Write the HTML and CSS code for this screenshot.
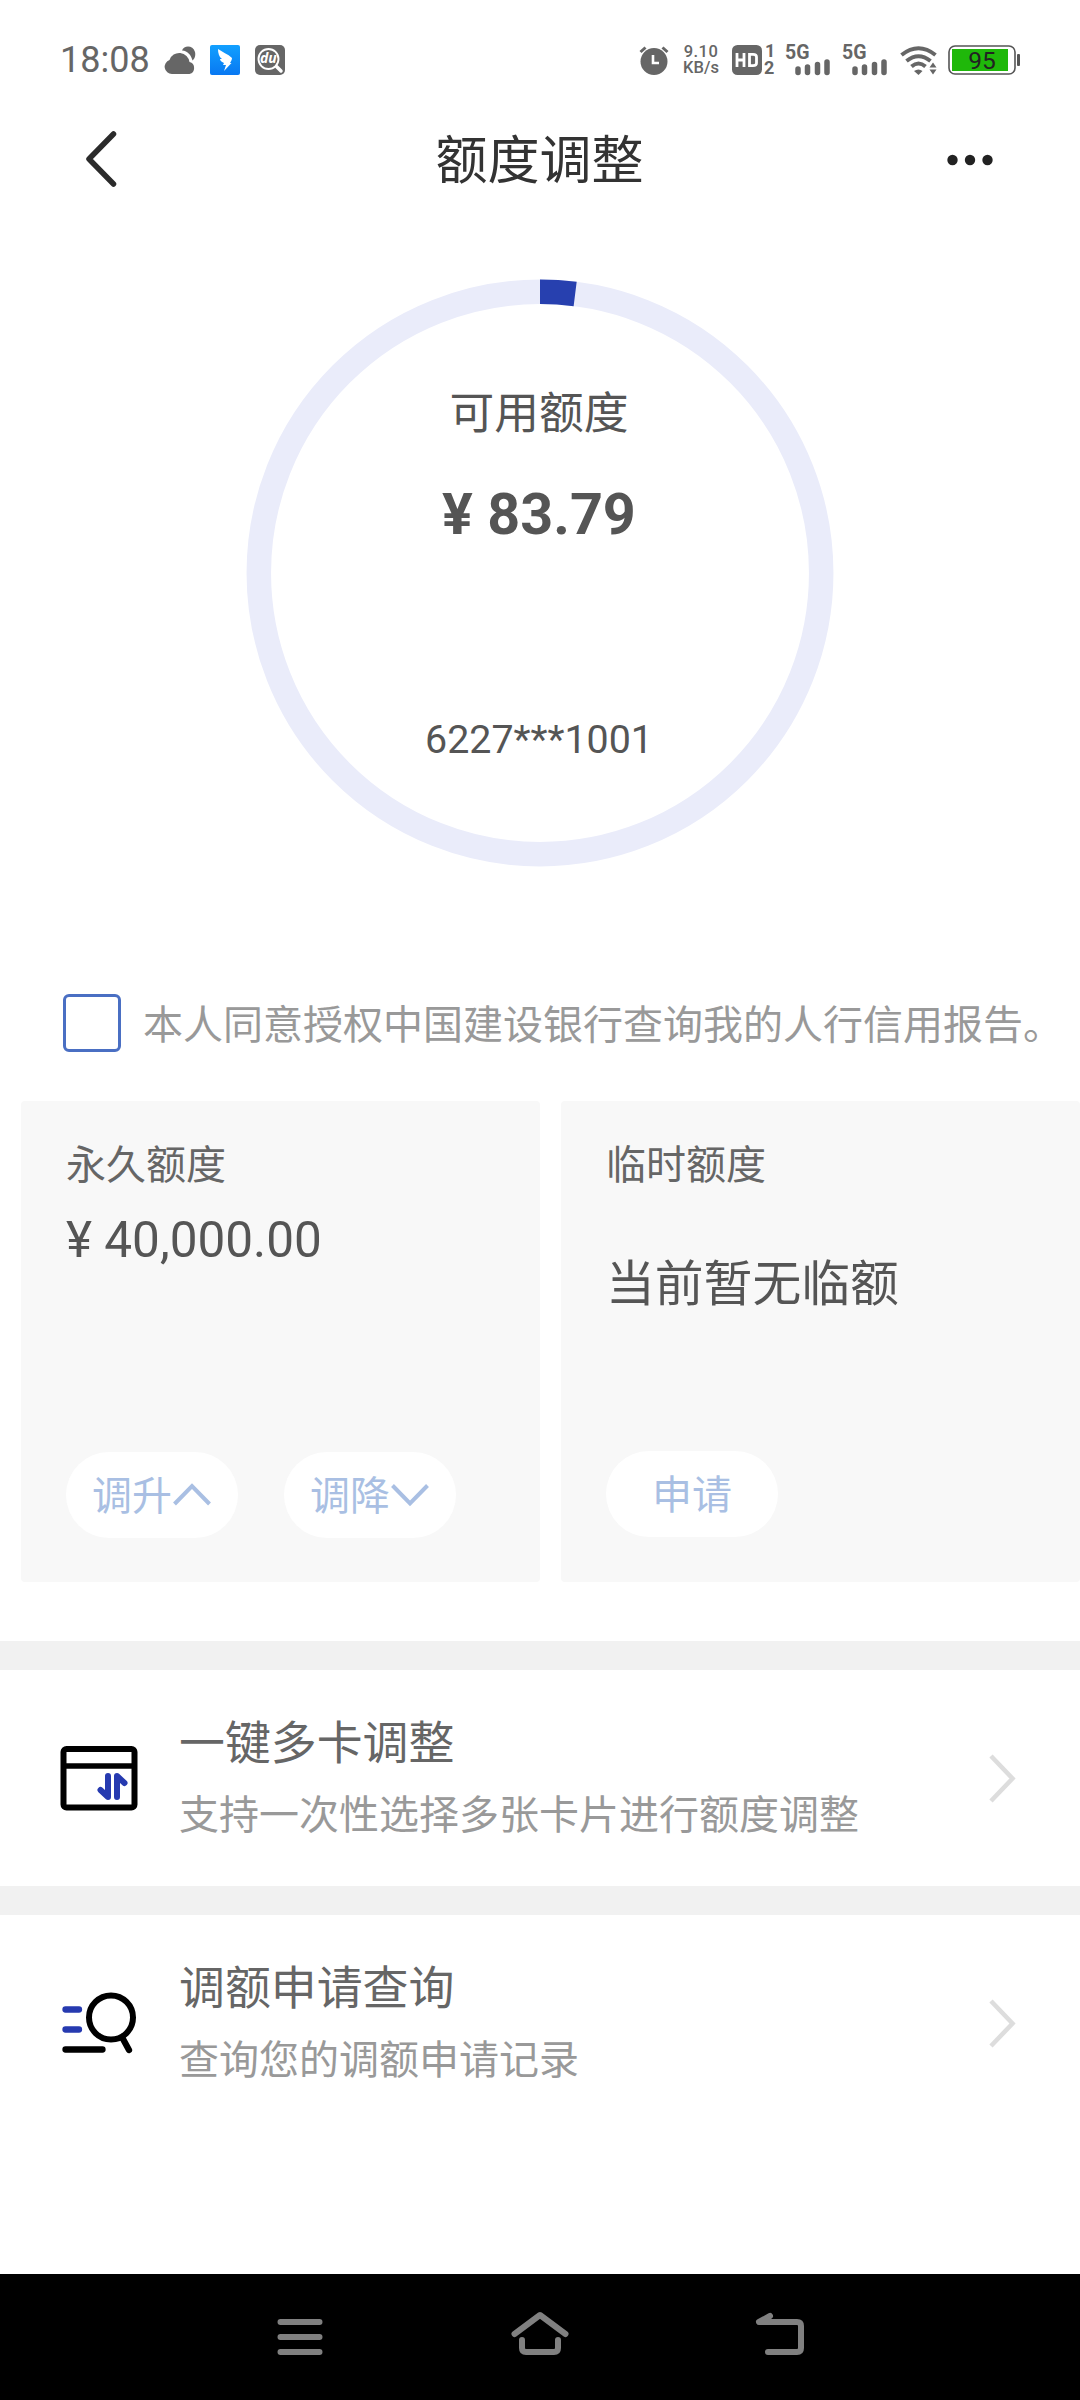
FILE: index.html
```html
<!DOCTYPE html>
<html lang="zh-CN">
<head>
<meta charset="utf-8">
<title>额度调整</title>
<link rel="stylesheet" href="styles.css">
</head>
<body>
<div class="screen">
  <div class="status">
    <span class="clock">18:08</span>
    <svg class="s-cloud" width="31" height="30" viewBox="0 0 31 30"><path d="M17 5.500C19 0 28 0 30 7C31 11 29 14.500 27.500 15.500C26 10 23 6 17 5.500Z" fill="#666"/><path d="M7 29A7.200 7.200 0 0 1 4.500 15A10.300 10.300 0 0 1 24.500 17A6.200 6.200 0 0 1 24.500 29Z" fill="#666"/></svg>
    <svg class="s-app" width="30" height="30" viewBox="0 0 30 30"><defs><linearGradient id="g" x1="0" y1="0" x2="0" y2="1"><stop offset="0" stop-color="#12a0ff"/><stop offset="1" stop-color="#0878f2"/></linearGradient></defs><rect width="30" height="30" rx="2" fill="url(#g)"/><path d="M8 4C12 7 18 9 22 13C22 15 21 16 20 18H21.500L14 26L16 20H13L14 18C11 17 10 15 10 14L12 14C9 12 8 8 8 4Z" fill="#fff"/></svg>
    <svg class="s-app" width="30" height="30" viewBox="0 0 30 30"><rect width="30" height="30" rx="5" fill="#666"/><circle cx="13.500" cy="14" r="10" fill="none" stroke="#fff" stroke-width="1.900"/><path d="M21.500 21.500L26 26" stroke="#fff" stroke-width="3.500" stroke-linecap="round"/><text x="13.300" y="18" class="du">du</text></svg>
    <div class="status-right">
      <svg width="30" height="30" viewBox="0 0 30 30"><circle cx="15" cy="16.500" r="13.500" fill="#666"/><path d="M1.500 7L6.500 2.500M28.500 7L23.500 2.500" stroke="#666" stroke-width="3"/><path d="M14 10V18H20" fill="none" stroke="#fff" stroke-width="2.600"/></svg>
      <div class="net"><span>9.10</span><span>KB/s</span></div>
      <svg class="s-hd" width="44" height="30" viewBox="0 0 44 30"><rect width="30" height="30" rx="5.500" fill="#666"/><path d="M5 8V22M12 8V22M5 15H12M17.500 9.300H21Q24.500 9.300 24.500 12V18Q24.500 20.700 21 20.700H17.500Z" fill="none" stroke="#fff" stroke-width="2.800"/><text x="33" y="12.300" class="sim">1</text><text x="32" y="29.300" class="sim">2</text></svg>
      <svg class="s-5g" width="46" height="30" viewBox="0 0 46 30"><text x="0" y="14.300" class="gen">5G</text><path d="M13 24V27.500M22.500 22V27.500M32.500 19.500V27.500M42 17V27.500" stroke="#666" stroke-width="5.500" stroke-linecap="round"/></svg>
      <svg class="s-5g2" width="46" height="30" viewBox="0 0 46 30"><text x="0" y="14.300" class="gen">5G</text><path d="M13 24V27.500M22.500 22V27.500M32.500 19.500V27.500M42 17V27.500" stroke="#666" stroke-width="5.500" stroke-linecap="round"/></svg>
      <svg class="s-wifi" width="37" height="30" viewBox="0 0 37 30"><path d="M1.500 10Q18.500-3.500 35.500 10M6.500 16Q18.500 6.500 30.500 16M11.500 21.500Q18.500 15.500 25.500 21.500" fill="none" stroke="#666" stroke-width="4"/><path d="M14 26Q18.500 23 22.500 26L18.500 30Z" fill="#666"/><path d="M29.500 22.500L33 17.500L36.500 22.500ZM29.500 24.500H36.500L33 29.500Z" fill="#666"/></svg>
      <svg class="s-bat" width="73" height="30" viewBox="0 0 73 30"><rect x="1" y="1" width="66" height="28" rx="6" fill="#fff" stroke="#555" stroke-width="1.600"/><rect x="4" y="4" width="56" height="22" fill="#1fb80a"/><rect x="69" y="9" width="3" height="12" rx="1" fill="#555"/><text x="34" y="23.500" class="pct">95</text></svg>
    </div>
  </div>

  <header class="bar">
    <svg width="34" height="60" viewBox="0 0 34 60"><path d="M29.500 4L5 29L29.500 54" fill="none" stroke="#2b2b2b" stroke-width="5.500" stroke-linecap="round" stroke-linejoin="round"/></svg>
    <h1>额度调整</h1>
    <svg width="50" height="12" viewBox="0 0 50 12"><g fill="#222"><circle cx="7.500" cy="6" r="5.200"/><circle cx="25" cy="6" r="5.200"/><circle cx="42.500" cy="6" r="5.200"/></g></svg>
  </header>

  <section class="gauge">
    <svg class="ring" width="588" height="588" viewBox="-294 -294 588 588"><circle r="281.200" fill="none" stroke="#eaecfa" stroke-width="24.500"/><circle r="281.200" fill="none" stroke="#2740af" stroke-width="24.500" pathLength="100" stroke-dasharray="2 98" transform="rotate(-90)"/></svg>
    <div class="gauge-text">
      <div class="g-label">可用额度</div>
      <div class="g-amount">¥ 83.79</div>
      <div class="g-card">6227***1001</div>
    </div>
  </section>

  <label class="agree"><span class="box"></span><span class="agree-text">本人同意授权中国建设银行查询我的人行信用报告。</span></label>

  <section class="cards">
    <div class="card">
      <div class="c-label">永久额度</div>
      <div class="c-amount">¥ 40,000.00</div>
      <div class="buttons">
        <div class="pill">调升<svg width="40" height="26" viewBox="0 0 40 26"><path d="M2.500 22L20 4L37.500 22" fill="none" stroke="#a9bfe3" stroke-width="4"/></svg></div>
        <div class="pill">调降<svg width="40" height="26" viewBox="0 0 40 26"><path d="M2.500 3.500L20 21.500L37.500 3.500" fill="none" stroke="#a9bfe3" stroke-width="4"/></svg></div>
      </div>
    </div>
    <div class="card right">
      <div class="c-label">临时额度</div>
      <div class="c-none">当前暂无临额</div>
      <div class="buttons"><div class="pill">申请</div></div>
    </div>
  </section>

  <section class="row">
    <svg class="r-icon" width="78" height="66" viewBox="0 0 78 66"><rect x="3.500" y="4" width="71" height="58.500" rx="3" fill="none" stroke="#000" stroke-width="6"/><path d="M4 21H74" stroke="#000" stroke-width="5.500"/><path d="M48 31V52L40.500 45M57 52V31L64.500 38" fill="none" stroke="#263ab0" stroke-width="6" stroke-linecap="round" stroke-linejoin="round"/></svg>
    <div class="r-text"><div class="r-title">一键多卡调整</div><div class="r-sub">支持一次性选择多张卡片进行额度调整</div></div>
    <svg class="chev" width="30" height="50" viewBox="0 0 30 50"><path d="M3 3L24.500 25.500L3 48" fill="none" stroke="#ddd" stroke-width="4.500"/></svg>
  </section>
  <section class="row">
    <svg class="r-icon" width="78" height="66" viewBox="0 0 78 66"><path d="M5.500 19.500H19M5.500 39.500H19" stroke="#263ab0" stroke-width="6.300" stroke-linecap="round"/><path d="M5.500 59.500H42.500M63 49L69 60" stroke="#000" stroke-width="6.300" stroke-linecap="round"/><circle cx="51" cy="27.500" r="22" fill="none" stroke="#000" stroke-width="6"/></svg>
    <div class="r-text"><div class="r-title">调额申请查询</div><div class="r-sub">查询您的调额申请记录</div></div>
    <svg class="chev" width="30" height="50" viewBox="0 0 30 50"><path d="M3 3L24.500 25.500L3 48" fill="none" stroke="#ddd" stroke-width="4.500"/></svg>
  </section>

  <nav class="nav">
    <svg width="60" height="48" viewBox="0 0 60 48"><path d="M10.500 11H49.500M10.500 26H49.500M10.500 41H49.500"/></svg>
    <svg width="60" height="48" viewBox="0 0 60 48"><path d="M4.500 23L30 4L55.500 23M12 29V37Q12 41 16 41H44Q48 41 48 37V29"/></svg>
    <svg width="60" height="48" viewBox="0 0 60 48"><path d="M20 5L9 11H47Q51 11 51 15V37Q51 41 47 41H18"/></svg>
  </nav>
</div>
</body>
</html>
```
FILE: styles.css
```css
* { box-sizing: border-box; }
body {
  margin: 0;
  background: #fff;
  font-family: Roboto, "Noto Sans CJK SC", sans-serif;
}
svg { display: block; flex: none; overflow: visible; }
.screen {
  width: 1080px;
  height: 2400px;
  display: flex;
  flex-direction: column;
  overflow: hidden;
}

/* status bar */
.status {
  height: 120px;
  padding: 0 59px 0 60px;
  display: flex;
  align-items: center;
  color: #666;
}
.clock { width: 105px; font-size: 36px; line-height: 36px; }
.s-app { margin-left: 15px; }
.s-cloud + .s-app { margin-left: 14px; }
.status-right { margin-left: auto; display: flex; align-items: center; }
.net {
  width: 36px;
  margin-left: 14px;
  display: flex;
  flex-direction: column;
  align-items: center;
  font-size: 16.500px;
  line-height: 16px;
  font-weight: 500;
}
.net span:first-child { letter-spacing: 0.500px; }
.s-hd { margin-left: 13px; }
.s-5g { margin-left: 9px; }
.s-5g2 { margin-left: 11px; }
.s-wifi { margin-left: 12px; }
.s-bat { margin-left: 11px; }
.du { font: italic bold 14px "Noto Sans", sans-serif; fill: #fff; text-anchor: middle; }
.sim { font: bold 18px Roboto, sans-serif; fill: #666; }
.gen { font: bold 19.500px Roboto, sans-serif; fill: #666; }
.pct { font: 24.500px Roboto, sans-serif; fill: #222; text-anchor: middle; }

/* title bar */
.bar {
  height: 80px;
  padding: 0 85px 0 84px;
  display: flex;
  align-items: center;
  justify-content: space-between;
}
.bar h1 {
  margin: 0 0 0 16px;
  padding-top: 4px;
  font-size: 52px;
  line-height: 60px;
  font-weight: 400;
  color: #333;
}

/* limit gauge */
.gauge {
  height: 588px;
  margin-top: 79px;
  display: grid;
  justify-content: center;
}
.ring, .gauge-text { grid-area: 1 / 1; }
.gauge-text {
  display: flex;
  flex-direction: column;
  align-items: center;
  padding: 105px 2px 0 0;
  color: #555;
}
.g-label { font-size: 44.700px; line-height: 60px; }
.g-amount { margin-top: 41px; font-size: 57.500px; line-height: 60px; font-weight: 700; }
.g-card { margin-top: 167px; font-size: 39.400px; line-height: 56px; }

.agree {
  height: 60px;
  margin-top: 126px;
  padding-left: 63px;
  display: flex;
  align-items: center;
  gap: 22px;
  font-size: 40px;
  line-height: 60px;
  color: #999;
  white-space: nowrap;
}
.agree-text { padding-top: 5px; }
.box { width: 58px; height: 58px; border: 3px solid #4a6fc3; border-radius: 6px; }

/* limit cards */
.cards {
  height: 540px;
  margin-top: 48px;
  padding-left: 21px;
  display: grid;
  grid-template-columns: 519px 519px;
  gap: 21px;
}
.card {
  height: 481px;
  padding: 36px 45px 44px;
  border-radius: 4px;
  background: #f8f8f8;
  display: flex;
  flex-direction: column;
}
.right { padding-bottom: 45px; }
.c-label { font-size: 40px; line-height: 58px; color: #666; }
.c-amount { margin-top: 16px; font-size: 49.500px; line-height: 58px; color: #555; }
.c-none { margin-top: 61px; font-size: 48.800px; line-height: 58px; color: #555; }
.buttons { margin-top: auto; display: flex; gap: 46px; }
.pill {
  width: 172px;
  height: 86px;
  padding-top: 4px;
  border-radius: 43px;
  background: #fff;
  display: flex;
  align-items: center;
  justify-content: center;
  font-size: 40px;
  line-height: 58px;
  color: #a9bfe3;
}
.pill svg { margin-top: -4px; }

/* menu rows */
.row {
  height: 245px;
  border-top: 29px solid #f1f1f1;
  padding: 0 62px 0 60px;
  display: flex;
  align-items: center;
}
.r-text { margin-left: 41px; padding-top: 3px; }
.r-title { font-size: 45.900px; line-height: 68px; color: #666; }
.r-sub { margin-top: 5px; font-size: 40px; line-height: 68px; color: #999; }
.chev { margin-left: auto; }

.nav {
  height: 126px;
  margin-top: auto;
  padding: 37px 270px 0;
  background: #000;
  display: flex;
  justify-content: space-between;
}
.nav path {
  fill: none;
  stroke: #808080;
  stroke-width: 6;
  stroke-linecap: round;
  stroke-linejoin: round;
}
```
